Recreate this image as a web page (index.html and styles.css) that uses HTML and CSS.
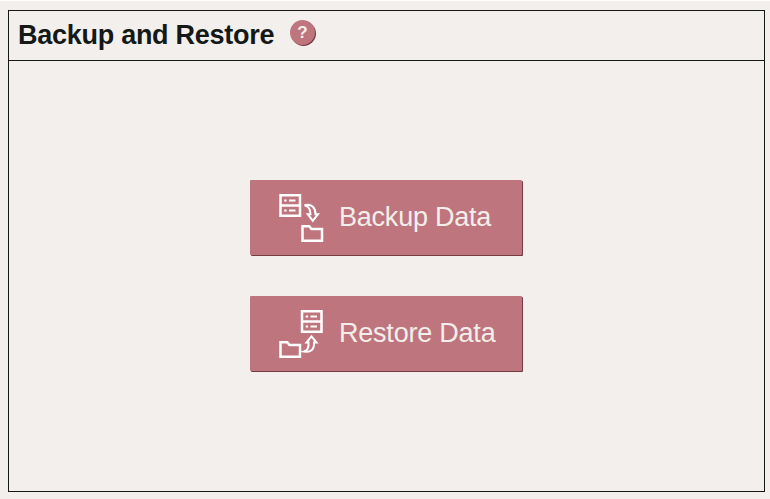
FILE: index.html
```
<!DOCTYPE html>
<html lang="en">
<head>
<meta charset="utf-8">
<title>Backup and Restore</title>
<link rel="stylesheet" href="styles.css">
</head>
<body>
<main class="panel">
  <header class="panel-header">
    <h1>Backup and Restore</h1>
    <button class="help" aria-label="Help">?</button>
  </header>
  <div class="actions">
    <button class="action">
      <svg class="icon" width="46" height="50" viewBox="0 0 46 50" fill="none" stroke="#fff" stroke-width="2.5">
        <path d="M1.500 2.200h19.500v20.500h-19.500zM1.500 12.500h19.500"/>
        <path stroke-width="2.200" d="M5.200 7.500h2.400M10 7.500h6.500M5.200 17.500h2.400M10 17.500h6.500"/>
        <path stroke-width="2" d="M25.500 12.200c7-2 11 2.500 11 9h2.500l-5.200 6.700-5-6.700h2.700c0-4.500-1-8-6-9z"/>
        <path d="M23.500 47.700V33.200h6.800l2.200 2.800h10.500v11.700z"/>
      </svg>
      <span>Backup Data</span>
    </button>
    <button class="action">
      <svg class="icon" width="46" height="50" viewBox="0 0 46 50" fill="none" stroke="#fff" stroke-width="2.500">
        <path d="M23 2.200h19.500v20.500h-19.500zM23 12.500h19.500"/>
        <path stroke-width="2.200" d="M26.700 7.500h2.400M31.500 7.500h6.500M26.700 17.500h2.400M31.500 17.500h6.500"/>
        <path stroke-width="2" d="M25 42.500c4.500-1.500 5-4.500 4.500-9h-2l5-6.200 5 6.200h-2.500c.5 6.500-3 10.500-10 9z"/>
        <path d="M1.500 47.700V33.200h6.800l2.200 2.800h10.500v11.700z"/>
      </svg>
      <span>Restore Data</span>
    </button>
  </div>
</main>
</body>
</html>
```
FILE: styles.css
```
* { box-sizing: border-box; }

body {
  margin: 0;
  height: 499px;
  padding: 9px 5px 7px 8px;
  border-top: 1px solid #fff;
  background: #f3efec;
  font-family: "Liberation Sans", Arial, sans-serif;
}

.panel {
  height: 482px;
  border: 1px solid #141817;
}

.panel-header {
  display: flex;
  height: 50px;
  padding: 9px 0 0 9px;
  border-bottom: 1px solid #141817;
}

h1 {
  width: 256px;
  margin: 0;
  color: #141817;
  font-size: 27px;
  letter-spacing: -0.27px;
  line-height: 31px;
  white-space: nowrap;
}

button {
  border: 0;
  background: #bf757d;
  color: #f2eeeb;
  font-family: inherit;
}

.help {
  width: 25px;
  height: 25px;
  margin-left: 16px;
  padding: 0;
  border-radius: 50%;
  box-shadow: 1px 1px 0 #753b43;
  font-size: 17px;
  font-weight: bold;
  line-height: 25px;
}

.actions {
  display: flex;
  flex-direction: column;
  gap: 41px;
  padding: 119px 0 0 241px;
}

.action {
  display: flex;
  width: 272px;
  height: 75px;
  padding: 13px 0 0 29px;
  border-radius: 1px;
  box-shadow: 1px 1px 0 #753b43;
  font-size: 27px;
  letter-spacing: -0.22px;
  line-height: 49px;
}

.action span {
  margin-left: 14px;
}
```
